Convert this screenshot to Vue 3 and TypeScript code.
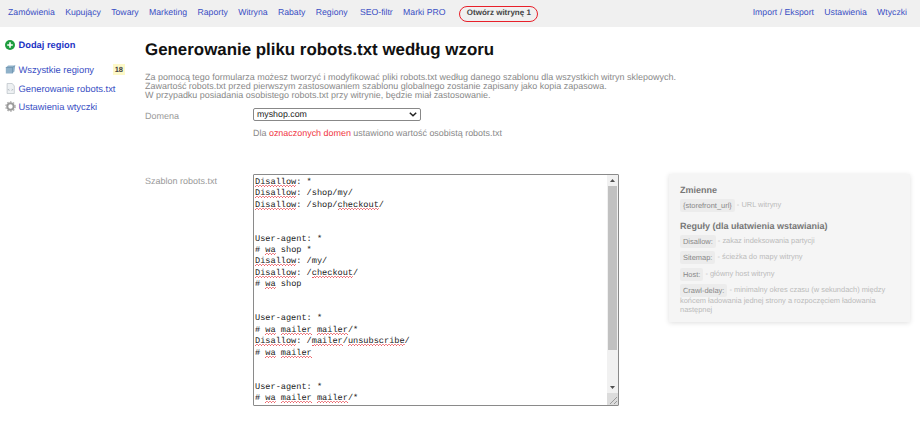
<script setup lang="ts">
const navLeft = ['Zamówienia', 'Kupujący', 'Towary', 'Marketing', 'Raporty', 'Witryna', 'Rabaty', 'Regiony']
const navRight = ['Import / Eksport', 'Ustawienia', 'Wtyczki']
const source = [
  'Disallow: *', 'Disallow: /shop/my/', 'Disallow: /shop/checkout/', '', '',
  'User-agent: *', '# wa shop *', 'Disallow: /my/', 'Disallow: /checkout/', '# wa shop', '', '',
  'User-agent: *', '# wa mailer mailer/*', 'Disallow: /mailer/unsubscribe/', '# wa mailer', '', '',
  'User-agent: *', '# wa mailer mailer/*',
]
const misspelled = /(Disallow|checkout|wa|mailer|unsubscribe)/
const lines = source.map((l) => l.split(misspelled).map((text, i) => ({ text, err: i % 2 === 1 })))
const rules = [
  { tag: 'Disallow:', text: '- zakaz indeksowania partycji' },
  { tag: 'Sitemap:', text: '- ścieżka do mapy witryny' },
  { tag: 'Host:', text: '- główny host witryny' },
  { tag: 'Crawl-delay:', text: '- minimalny okres czasu (w sekundach) między końcem ładowania jednej strony a rozpoczęciem ładowania następnej' },
]
</script>

<template>
  <div class="page">
    <header class="nav">
      <a v-for="n in navLeft" :key="n" class="nav-link">{{ n }}</a>
      <a class="nav-link seo">SEO-filtr</a>
      <a class="nav-link">Marki PRO</a>
      <a class="open-site">Otwórz witrynę 1</a>
      <div class="nav-right">
        <a v-for="n in navRight" :key="n" class="nav-link">{{ n }}</a>
      </div>
    </header>
    <div class="body">
      <aside class="side">
        <div class="add">
          <svg width="10" height="10" viewBox="0 0 10 10"><circle cx="5" cy="5" r="5" fill="#1f9d3f" /><path d="M5 2.2v5.6M2.2 5h5.6" stroke="#fff" stroke-width="1.6" /></svg>
          <a>Dodaj region</a>
        </div>
        <ul class="menu">
          <li>
            <svg width="11" height="11" viewBox="0 0 14 12"><path d="M1 3.5 4 1h9l-1 7.5L9 11H1z" fill="#8fb1c9" /><path d="M1 3.5h8.5V11M9.5 3.5 13 1" fill="none" stroke="#5f86a3" stroke-width=".7" /></svg>
            <a>Wszystkie regiony</a><span class="badge">18</span>
          </li>
          <li>
            <svg width="11" height="11" viewBox="0 0 12 13"><path d="M2 .5h6l2.5 3v9H2z" fill="#eef1f3" stroke="#b4bcc2" stroke-width=".8" /><path d="M4.5 7 3.5 8l1 1M7.5 7l1 1-1 1" fill="none" stroke="#7d8a94" stroke-width=".7" /></svg>
            <a>Generowanie robots.txt</a>
          </li>
          <li>
            <svg width="11" height="11" viewBox="0 0 12 12"><circle cx="6" cy="6" r="3.5" fill="none" stroke="#999" stroke-width="2.2" /><circle cx="6" cy="6" r="5" fill="none" stroke="#aaa" stroke-width="1.6" stroke-dasharray="1.6 1.6" /></svg>
            <a>Ustawienia wtyczki</a>
          </li>
        </ul>
      </aside>
      <main class="main">
        <h1>Generowanie pliku robots.txt według wzoru</h1>
        <p class="intro">
          Za pomocą tego formularza możesz tworzyć i modyfikować pliki robots.txt według danego szablonu dla wszystkich witryn sklepowych.<br />
          Zawartość robots.txt przed pierwszym zastosowaniem szablonu globalnego zostanie zapisany jako kopia zapasowa.<br />
          W przypadku posiadania osobistego robots.txt przy witrynie, będzie miał zastosowanie.
        </p>
        <div class="row domain">
          <label>Domena</label>
          <div class="field">
            <div class="select">
              <span>myshop.com</span>
              <svg width="8" height="5" viewBox="0 0 8 5"><path d="M.8.8 4 3.8 7.2.8" fill="none" stroke="#222" stroke-width="1.5" /></svg>
            </div>
            <p class="hint">Dla <span class="red">oznaczonych domen</span> ustawiono wartość osobistą robots.txt</p>
          </div>
        </div>
        <div class="row template">
          <label>Szablon robots.txt</label>
          <div class="textarea">
            <div class="code">
              <div v-for="(l, i) in lines" :key="i" class="line"><template v-for="(s, j) in l" :key="j"><span v-if="s.err" class="err">{{ s.text }}</span><template v-else>{{ s.text }}</template></template></div>
            </div>
            <div class="scrollbar">
              <svg class="arrow" width="11" height="11" viewBox="0 0 11 11"><path d="M5.5 4 8 7H3z" fill="#505050" /></svg>
              <div class="track"><div class="thumb"></div></div>
              <svg class="arrow" width="11" height="11" viewBox="0 0 11 11"><path d="M3 4h5L5.5 7z" fill="#505050" /></svg>
              <div class="corner">
                <svg width="11" height="12" viewBox="0 0 11 12"><path d="M10 4 3 11M10 8l-3 3" stroke="#888" stroke-width=".8" /></svg>
              </div>
            </div>
          </div>
          <section class="help">
            <h3>Zmienne</h3>
            <p class="help-row"><code>{storefront_url}</code> - URL witryny</p>
            <h3 class="second">Reguły (dla ułatwienia wstawiania)</h3>
            <p v-for="r in rules" :key="r.tag" class="help-row"><code>{{ r.tag }}</code> {{ r.text }}</p>
          </section>
        </div>
      </main>
    </div>
  </div>
</template>

<style>
html, body { margin: 0; background: #fff; overflow: hidden; }
</style>

<style scoped>
.page { width: 920px; height: 421px; overflow: hidden; font-family: "Liberation Sans", Arial, sans-serif; font-size: 9px; color: #888; text-rendering: geometricPrecision; }
.nav { height: 27px; background: #f0f0f0; display: flex; align-items: center; gap: 10.3px; padding: 0 8px; box-sizing: border-box; }
.nav-link { color: #3a4fc4; font-size: 8.7px; white-space: nowrap; position: relative; top: -1.5px; }
.seo { margin-left: 2px; }
.open-site { margin-left: 3.5px; border: 1.7px solid #e8202a; border-radius: 9px; height: 16px; width: 79px; text-align: center; box-sizing: border-box; line-height: 12.6px; font-size: 8px; font-weight: 700; color: #444; white-space: nowrap; }
.nav-right { margin-left: auto; display: flex; gap: 10.3px; padding-right: 5px; }
.body { display: flex; }
.side { width: 145px; flex: none; padding: 12px 0 0 5px; box-sizing: border-box; }
.add { display: flex; align-items: center; gap: 3.5px; color: #1c33c4; font-weight: 700; font-size: 9.3px; height: 11px; }
.menu { list-style: none; margin: 10.5px 0 0; padding: 0; }
.menu li { display: flex; align-items: center; height: 18.4px; padding-right: 20px; color: #3a4fc4; font-size: 9.4px; white-space: nowrap; }
.menu svg { flex: none; margin-right: 2.5px; }
.badge { margin-left: auto; background: #fdf9c8; color: #444; font-weight: 700; font-size: 7.5px; padding: 0 2px; line-height: 11px; }
.main { flex: 1; min-width: 0; }
h1 { margin: 13px 0 0; font-size: 16.9px; line-height: 20px; font-weight: 700; color: #111; white-space: nowrap; }
.intro { margin: 13px 0 0; font-size: 8.97px; line-height: 8.9px; color: #888; white-space: nowrap; }
.row { display: flex; }
.row label { width: 108px; flex: none; color: #999; font-size: 9px; }
.domain { margin-top: 8px; }
.domain label { line-height: 14px; padding-top: 1px; }
.select { width: 168px; height: 13px; box-sizing: border-box; border: 1px solid #888; border-radius: 2px; display: flex; align-items: center; justify-content: space-between; padding: 0 3px; background: #fff; color: #222; font-size: 8.8px; }
.hint { margin: 7px 0 0; font-size: 8.95px; line-height: 11px; color: #888; white-space: nowrap; }
.red { color: #f0353f; }
.template { margin-top: 35px; align-items: flex-start; }
.template label { padding-top: 2px; }
.textarea { width: 366px; height: 232px; box-sizing: border-box; border: 1px solid #8a8a8a; border-radius: 1px; display: flex; overflow: hidden; background: #fff; flex: none; }
.code { flex: 1; padding: 2px 1px 0; overflow: hidden; font-family: "Liberation Mono", "DejaVu Sans Mono", monospace; font-size: 8.6px; line-height: 11.4px; color: #222; white-space: pre; }
.line { height: 11.4px; }
.err {
  background:
    repeating-linear-gradient(90deg, #ec5f66 0 1.5px, transparent 1.5px 3px) 0 100% / 100% 1px no-repeat,
    repeating-linear-gradient(90deg, transparent 0 1.5px, #f08a8f 1.5px 3px) 0 calc(100% - 1px) / 100% 1px no-repeat;
}
.scrollbar { width: 11px; flex: none; background: #f1f1f1; display: flex; flex-direction: column; }
.arrow { flex: none; }
.track { flex: 1; }
.thumb { height: 164px; margin: 0 1px; background: #c1c1c1; }
.corner { height: 12px; flex: none; background: #dcdcdc; }
.corner svg { display: block; }
.help { width: 241px; box-sizing: border-box; margin: 0 0 0 50px; background: #f5f5f5; box-shadow: 0 1px 5px rgba(0, 0, 0, .13); padding: 11px 11px 8px; color: #bbb; font-size: 7.45px; line-height: 8.6px; height: 148px; flex: none; }
h3 { margin: 0 0 3px; font-size: 9px; line-height: 11px; color: #777; font-weight: 700; }
h3.second { margin-top: 9px; }
.help-row { margin: 0 0 3.5px; }
code { font-family: "Liberation Sans", Arial, sans-serif; background: #ececec; color: #888; padding: 0 3px; border-radius: 2px; margin-right: 0; line-height: 13px; height: 13px; display: inline-block; vertical-align: middle; }
</style>
